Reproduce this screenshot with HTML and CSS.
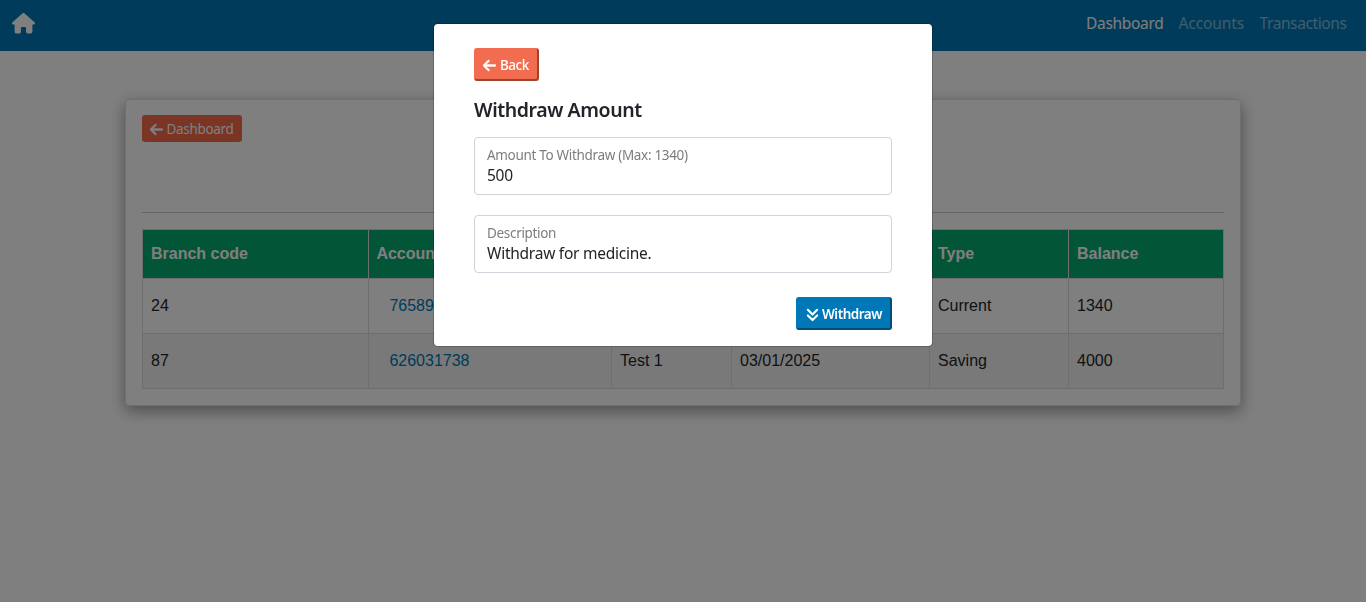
FILE: index.html
```html
<!DOCTYPE html>
<html lang="en">
<head>
<meta charset="utf-8">
<title>Withdraw Amount</title>
<link rel="stylesheet" href="styles.css">
</head>
<body>
<nav class="navbar">
  <a class="home" aria-label="Home"><svg viewBox="0 0 576 512"><path d="M575.8 255.5c0 18-15 32.1-32 32.1h-32l.7 160.2c0 2.7-.2 5.4-.5 8.1V472c0 22.1-17.9 40-40 40H456c-1.1 0-2.2 0-3.3-.1c-1.4 .1-2.8 .1-4.2 .1H416 392c-22.1 0-40-17.9-40-40V448 384c0-17.7-14.3-32-32-32H256c-17.7 0-32 14.3-32 32v64 24c0 22.1-17.9 40-40 40H160 128.1c-1.5 0-3-.1-4.5-.2c-1.2 .1-2.4 .2-3.6 .2H104c-22.1 0-40-17.9-40-40V360c0-.9 0-1.9 .1-2.8V287.6H32c-18 0-32-14-32-32.1c0-9 3-17 10-24L266.4 8c7-7 15-8 22-8s15 2 21 7L564.8 231.5c8 7 12 15 11 24z"/></svg></a>
  <div class="links">
    <a class="link active w-dash">Dashboard</a>
    <a class="link w-acc">Accounts</a>
    <a class="link w-tran">Transactions</a>
  </div>
</nav>
<main class="card">
  <a class="btn-dashboard"><svg class="arrow" viewBox="0 0 448 512"><path d="M9.4 233.4c-12.5 12.5-12.5 32.8 0 45.3l160 160c12.5 12.5 32.8 12.5 45.3 0s12.5-32.8 0-45.3L109.2 288 416 288c17.7 0 32-14.3 32-32s-14.3-32-32-32l-306.7 0L214.6 118.6c12.5-12.5 12.5-32.8 0-45.3s-32.8-12.5-45.3 0l-160 160z"/></svg><span>Dashboard</span></a>
  <hr class="rule">
  <table class="accounts">
    <colgroup><col class="c1"><col class="c2"><col class="c3"><col class="c4"><col class="c5"><col class="c6"></colgroup>
    <thead><tr><th>Branch code</th><th>Accoun</th><th></th><th></th><th>Type</th><th>Balance</th></tr></thead>
    <tbody>
      <tr><td>24</td><td><a class="number">76589</a></td><td></td><td></td><td>Current</td><td>1340</td></tr>
      <tr><td>87</td><td><a class="number">626031738</a></td><td>Test 1</td><td>03/01/2025</td><td>Saving</td><td>4000</td></tr>
    </tbody>
  </table>
</main>
<div class="overlay">
  <section class="modal">
    <button class="btn btn-back"><svg class="arrow" viewBox="0 0 448 512"><path d="M9.4 233.4c-12.5 12.5-12.5 32.8 0 45.3l160 160c12.5 12.5 32.8 12.5 45.3 0s12.5-32.8 0-45.3L109.2 288 416 288c17.7 0 32-14.3 32-32s-14.3-32-32-32l-306.7 0L214.6 118.6c12.5-12.5 12.5-32.8 0-45.3s-32.8-12.5-45.3 0l-160 160z"/></svg><span>Back</span></button>
    <h1 class="title">Withdraw Amount</h1>
    <div class="field"><span class="label label-amount">Amount To Withdraw (Max: 1340)</span><span class="value value-amount">500</span></div>
    <div class="field"><span class="label label-desc">Description</span><span class="value value-desc">Withdraw for medicine.</span></div>
    <button class="btn btn-withdraw"><svg class="arrow down" viewBox="0 0 448 512"><path d="M64 96l160 160L384 96M64 288l160 160 160-160"/></svg><span>Withdraw</span></button>
  </section>
</div>
</body>
</html>
```
FILE: styles.css
```css
* { box-sizing: border-box; }
body {
  margin: 0;
  height: 602px;
  overflow: hidden;
  background: #fff;
  font-family: "Noto Sans", "Open Sans", sans-serif;
  color: #212529;
}
svg { display: block; fill: currentColor; flex: none; }
span, a { white-space: nowrap; }

.navbar {
  height: 51px;
  padding: 0 20px 4px 12px;
  display: flex;
  align-items: center;
  justify-content: space-between;
  background: #0077b6;
}
.home { color: #fff; }
.home svg { width: 23px; height: 20.4px; }
.links { display: flex; gap: 16px; }
.link { font-size: 15.5px; line-height: 23px; color: rgba(255, 255, 255, .5); }
.link.active { color: #fff; }
.w-dash { width: 76.5px; letter-spacing: -.3px; }
.w-acc { width: 65px; letter-spacing: -.1px; }
.w-tran { width: 86.5px; letter-spacing: -.4px; }

.card {
  width: 1116px;
  height: 307px;
  margin: 48px 0 0 125px;
  padding: 15px 16px;
  border: 1px solid rgba(0, 0, 0, .125);
  border-radius: 4px;
  box-shadow: 0 5px 16px rgba(0, 0, 0, .4);
}
.btn-dashboard {
  display: flex;
  align-items: center;
  gap: 4px;
  width: 100px;
  height: 27px;
  padding: 1px 0 0 7.5px;
  border-radius: 3px;
  background: #f46b4b;
  color: #fff;
  font-size: 13.5px;
  letter-spacing: -.32px;
}
.arrow { width: 13px; height: 15px; stroke: currentColor; stroke-width: 14; }
.rule { margin: 70px 0 16px; border: 0; border-top: 1px solid #c8c8c8; }

.accounts {
  width: 1082px;
  table-layout: fixed;
  border-collapse: collapse;
  font: 16px/24px "Liberation Sans", Arial, sans-serif;
}
.c1 { width: 226px; }
.c2 { width: 243px; }
.c3 { width: 120px; }
.c4 { width: 198px; }
.c5 { width: 139px; }
.c6 { width: 155px; }
.accounts th, .accounts td { border: 1px solid #ddd; padding: 0 8px; text-align: left; }
.accounts th { height: 49px; background: #04aa6d; color: #fff; padding-bottom: 1px; }
.accounts td { height: 55px; padding-bottom: 1px; }
.accounts th:nth-child(2), .accounts td:nth-child(2) { padding-left: 7.4px; }
.accounts tbody tr:nth-child(even) { background: #f2f2f2; }
.number { padding-left: 13px; color: #0077b6; }

.overlay {
  position: fixed;
  inset: 0;
  padding-top: 24px;
  background: rgba(0, 0, 0, .5);
}
.modal {
  display: flex;
  flex-direction: column;
  width: 498px;
  height: 322px;
  margin-left: 434px;
  padding: 24px 40px 16px;
  border-radius: 4px;
  background: #fff;
  box-shadow: 0 0 0 1px rgba(0, 0, 0, .2);
}
.btn {
  display: flex;
  align-items: center;
  height: 33px;
  border: 2px solid;
  border-width: 1px 2px 2px 1px;
  border-radius: 3px;
  color: #fff;
  font: 500 13.5px/20px "Noto Sans", "Open Sans", sans-serif;
}
.btn-back {
  width: 65px;
  padding: 2px 0 0 8px;
  gap: 4px;
  background: #f26c4f;
  border-color: #f26c4f #9f432e #9f432e #f26c4f;
  letter-spacing: -.5px;
}
.btn-withdraw {
  align-self: flex-end;
  width: 96px;
  margin-top: 24px;
  padding: 2px 0 0 9px;
  gap: 3px;
  background: #0077b6;
  border-color: #0077b6 #004c75 #004c75 #0077b6;
  font-weight: 600;
  letter-spacing: -.5px;
}
.down { fill: none; stroke: currentColor; stroke-width: 74; stroke-linecap: round; stroke-linejoin: round; }
.title {
  margin: 17px 0 15px;
  font-size: 19.5px;
  line-height: 24px;
  font-weight: 600;
  letter-spacing: -.42px;
  white-space: nowrap;
}
.field {
  display: flex;
  flex-direction: column;
  height: 58px;
  padding: 7px 12px;
  border: 1px solid #ced4da;
  border-radius: 4px;
}
.field + .field { margin-top: 20px; }
.label { font-size: 13.5px; line-height: 20px; color: #7b7e81; letter-spacing: -.32px; }
.value { font-size: 15.5px; line-height: 21px; letter-spacing: -.25px; }
```
